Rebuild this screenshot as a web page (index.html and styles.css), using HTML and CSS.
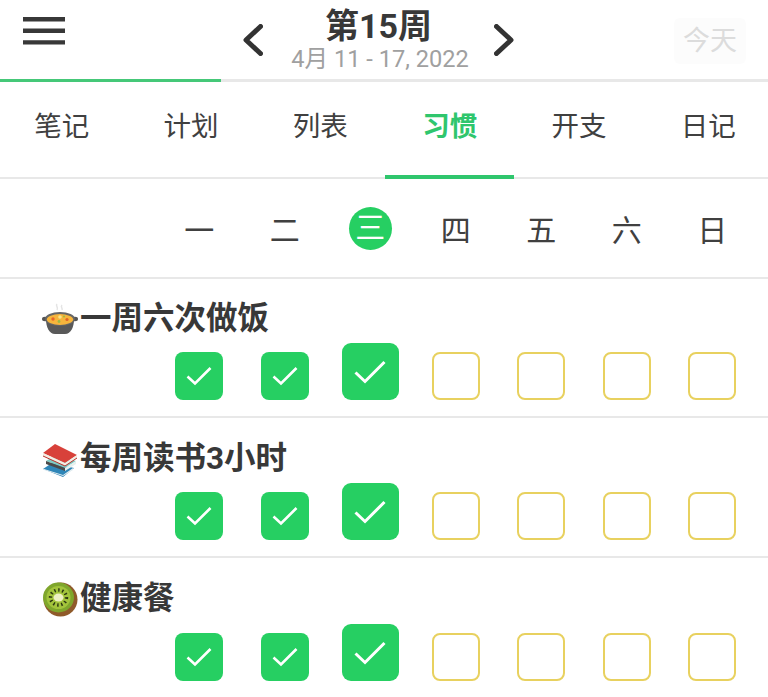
FILE: index.html
```html
<!DOCTYPE html>
<html lang="zh-CN">
<head>
    <meta charset="UTF-8">
    <title>习惯</title>
    <link rel="stylesheet" href="styles.css">
</head>
<body>

    <header class="topbar">
        <svg class="menu" width="42" height="28" viewBox="0 0 42 28"><path d="M0 2.2h42M0 13.8h42M0 25.4h42" stroke="#383838" stroke-width="4.4"/></svg>
        <div class="week-nav">
            <svg class="chev" width="20" height="32" viewBox="0 0 20 32"><path d="M17.5 2.5 3 16l14.5 13.5" fill="none" stroke="#333" stroke-width="5" stroke-linecap="round" stroke-linejoin="round"/></svg>
            <div class="week-title">
                <div class="week-name">第15周</div>
                <div class="week-range">4月 11 - 17, 2022</div>
            </div>
            <svg class="chev" width="20" height="32" viewBox="0 0 20 32"><path d="M2.5 2.5 17 16 2.5 29.5" fill="none" stroke="#333" stroke-width="5" stroke-linecap="round" stroke-linejoin="round"/></svg>
        </div>
        <div class="today">今天</div>
    </header>
    <div class="progress"><div class="progress-fill"></div></div>

    <nav class="tabs">
        <div class="tab">笔记</div>
        <div class="tab">计划</div>
        <div class="tab">列表</div>
        <div class="tab active">习惯</div>
        <div class="tab">开支</div>
        <div class="tab">日记</div>
    </nav>

    <div class="days">
        <div class="day">一</div>
        <div class="day">二</div>
        <div class="day"><span class="today-dot">三</span></div>
        <div class="day">四</div>
        <div class="day">五</div>
        <div class="day">六</div>
        <div class="day">日</div>
    </div>

    <section class="habit">
        <h3 class="habit-name">
            <svg class="emoji" width="36" height="36" viewBox="0 0 36 36">
                <path d="M15 3c-2 2 2 3 0 6M20 4c-2 2 1 3 0 5" fill="none" stroke="#e4e4e4" stroke-width="1.5"/>
                <ellipse cx="3" cy="18" rx="3" ry="2.2" fill="#555"/>
                <ellipse cx="33" cy="18" rx="3" ry="2.2" fill="#555"/>
                <path d="M4 18c0 8 3 15 9 15h10c6 0 9-7 9-15z" fill="#595959"/>
                <ellipse cx="18" cy="18" rx="15" ry="7" fill="#666"/>
                <ellipse cx="18" cy="18.5" rx="13.2" ry="5.4" fill="#f7b53c"/>
                <circle cx="11" cy="18" r="1.7" fill="#e8662a"/>
                <circle cx="18" cy="16" r="1.8" fill="#f8e58a"/>
                <circle cx="25" cy="18.5" r="1.6" fill="#e0642a"/>
                <circle cx="17" cy="20.5" r="1.4" fill="#9bbb45"/>
                <circle cx="22" cy="15.5" r="1.1" fill="#9bbb45"/>
            </svg>一周六次做饭
        </h3>
        <div class="checks">
            <div class="cell"><span class="box done"><svg width="26" height="20" viewBox="0 0 26 20"><path d="M1.5 10.5 9 17.5 24.5 2" fill="none" stroke="#fff" stroke-width="2.6"/></svg></span></div>
            <div class="cell"><span class="box done"><svg width="26" height="20" viewBox="0 0 26 20"><path d="M1.5 10.5 9 17.5 24.5 2" fill="none" stroke="#fff" stroke-width="2.6"/></svg></span></div>
            <div class="cell"><span class="box done big"><svg width="32" height="24" viewBox="0 0 32 24"><path d="M1.5 12.5 11 21.5 30.5 2" fill="none" stroke="#fff" stroke-width="3"/></svg></span></div>
            <div class="cell"><span class="box"></span></div>
            <div class="cell"><span class="box"></span></div>
            <div class="cell"><span class="box"></span></div>
            <div class="cell"><span class="box"></span></div>
        </div>
    </section>

    <section class="habit">
        <h3 class="habit-name">
            <svg class="emoji" width="36" height="36" viewBox="0 0 36 36">
                <path d="M1 28 10 22l22 5-11 9z" fill="#2f86b8"/>
                <path d="M2 28l19 6 10-7v2l-10 6-19-6z" fill="#e3edf0"/>
                <path d="M4 20l8-5 22 5-11 7z" fill="#7fcbc4"/>
                <path d="M4 20l19 7v3L4 23z" fill="#4a4a4a"/>
                <path d="M23 27l11-7v3l-11 7z" fill="#e6f0ee"/>
                <path d="M1 12 13 3l22 11-12 8z" fill="#d8413a"/>
                <path d="M1 12l22 10 12-8v3l-12 8L1 15z" fill="#f3ece2"/>
                <path d="M1 15l22 10 12-8" fill="none" stroke="#b8322c" stroke-width="1"/>
            </svg>每周读书3小时
        </h3>
        <div class="checks">
            <div class="cell"><span class="box done"><svg width="26" height="20" viewBox="0 0 26 20"><path d="M1.5 10.5 9 17.5 24.5 2" fill="none" stroke="#fff" stroke-width="2.6"/></svg></span></div>
            <div class="cell"><span class="box done"><svg width="26" height="20" viewBox="0 0 26 20"><path d="M1.5 10.5 9 17.5 24.5 2" fill="none" stroke="#fff" stroke-width="2.6"/></svg></span></div>
            <div class="cell"><span class="box done big"><svg width="32" height="24" viewBox="0 0 32 24"><path d="M1.5 12.5 11 21.5 30.5 2" fill="none" stroke="#fff" stroke-width="3"/></svg></span></div>
            <div class="cell"><span class="box"></span></div>
            <div class="cell"><span class="box"></span></div>
            <div class="cell"><span class="box"></span></div>
            <div class="cell"><span class="box"></span></div>
        </div>
    </section>

    <section class="habit">
        <h3 class="habit-name">
            <svg class="emoji" width="36" height="36" viewBox="0 0 36 36">
                <ellipse cx="18.5" cy="18.5" rx="17" ry="17" fill="#8f5a2a"/>
                <ellipse cx="16.5" cy="16.5" rx="15.5" ry="15" fill="#7fa62c"/>
                <ellipse cx="16.5" cy="16.5" rx="12" ry="11.5" fill="#a3c43c"/>
                <ellipse cx="16.5" cy="16.5" rx="8" ry="7.5" fill="none" stroke="#2b3512" stroke-width="3.4" stroke-dasharray="1.4 2.6"/>
                <ellipse cx="16.5" cy="16.5" rx="5" ry="4" fill="#eef0c4"/>
            </svg>健康餐
        </h3>
        <div class="checks">
            <div class="cell"><span class="box done"><svg width="26" height="20" viewBox="0 0 26 20"><path d="M1.5 10.5 9 17.5 24.5 2" fill="none" stroke="#fff" stroke-width="2.6"/></svg></span></div>
            <div class="cell"><span class="box done"><svg width="26" height="20" viewBox="0 0 26 20"><path d="M1.5 10.5 9 17.5 24.5 2" fill="none" stroke="#fff" stroke-width="2.6"/></svg></span></div>
            <div class="cell"><span class="box done big"><svg width="32" height="24" viewBox="0 0 32 24"><path d="M1.5 12.5 11 21.5 30.5 2" fill="none" stroke="#fff" stroke-width="3"/></svg></span></div>
            <div class="cell"><span class="box"></span></div>
            <div class="cell"><span class="box"></span></div>
            <div class="cell"><span class="box"></span></div>
            <div class="cell"><span class="box"></span></div>
        </div>
    </section>

</body>
</html>
```

FILE: styles.css
```css
html, body {
    height: 697px;
    overflow: hidden;
}
body {
    margin: 0;
    background: #fff;
    color: #383838;
    font-family: "Roboto", "Noto Sans CJK SC", sans-serif;
}
.topbar {
    display: flex;
    align-items: flex-start;
    height: 79px;
    padding-left: 23px;
    box-sizing: border-box;
}
.menu {
    margin-top: 17px;
    flex: none;
}
.week-nav {
    display: flex;
    align-items: flex-start;
    margin-left: 178px;
}
.chev {
    margin-top: 24px;
    flex: none;
}
.week-title {
    width: 231px;
    text-align: center;
}
.week-name {
    margin-top: 5px;
    font-size: 34px;
    line-height: 42px;
    font-weight: 700;
    color: #383838;
}
.week-range {
    margin-top: -2px;
    padding-left: 3px;
    font-size: 23.6px;
    line-height: 28px;
    color: #a0a0a0;
}
.today {
    margin-left: 160px;
    margin-top: 18px;
    padding: 0 9px;
    height: 46px;
    line-height: 46px;
    font-size: 27px;
    color: #dcdcdc;
    background: #fcfcfc;
    border-radius: 6px;
}
.progress {
    height: 3px;
    background: #e8e8e8;
}
.progress-fill {
    width: 221px;
    height: 100%;
    background: #45c878;
}
.tabs {
    display: flex;
    margin: 0 -5px 0 -3px;
    height: 97px;
    border-bottom: 2px solid #e8e8e8;
    box-sizing: border-box;
}
.tab {
    flex: 1;
    text-align: center;
    font-size: 27.5px;
    line-height: 90px;
    height: 97px;
    box-sizing: border-box;
    color: #404040;
}
.tab.active {
    color: #2fc66d;
    font-weight: 700;
    border-bottom: 4px solid #2fc66d;
}
.days {
    display: grid;
    grid-template-columns: repeat(7, 85.5px);
    padding-left: 156.4px;
    height: 100px;
    align-items: center;
    border-bottom: 2px solid #e8e8e8;
    box-sizing: border-box;
    font-size: 30px;
}
.day {
    text-align: center;
    color: #404040;
}
.today-dot {
    display: inline-block;
    width: 43px;
    height: 43px;
    line-height: 42px;
    border-radius: 50%;
    background: #26cf62;
    color: #fff;
}
.habit {
    height: 140px;
    box-sizing: border-box;
    border-bottom: 2px solid #e8e8e8;
}
.habit:first-of-type {
    height: 139px;
}
.habit:last-of-type {
    height: 144px;
}
.habit-name {
    display: flex;
    align-items: center;
    margin: 0;
    padding: 18px 0 0 42px;
    height: 64px;
    box-sizing: border-box;
    font-size: 31.5px;
    line-height: 40px;
    font-weight: 700;
    color: #383838;
}
.habit:first-of-type .habit-name {
    padding-top: 17px;
    height: 63px;
}
.emoji {
    flex: none;
    margin-right: 2px;
}
.checks {
    display: grid;
    grid-template-columns: repeat(7, 85.5px);
    padding-left: 156.4px;
    height: 58px;
    align-items: end;
}
.habit:last-of-type .checks {
    margin-top: 1px;
}
.cell {
    display: flex;
    justify-content: center;
    align-items: flex-end;
}
.box {
    display: flex;
    align-items: center;
    justify-content: center;
    width: 48px;
    height: 48px;
    box-sizing: border-box;
    border: 2px solid #e8d15f;
    border-radius: 8px;
}
.box.done {
    background: #26cf62;
    border: none;
}
.box.big {
    width: 57px;
    height: 57px;
    border-radius: 9px;
}
```
